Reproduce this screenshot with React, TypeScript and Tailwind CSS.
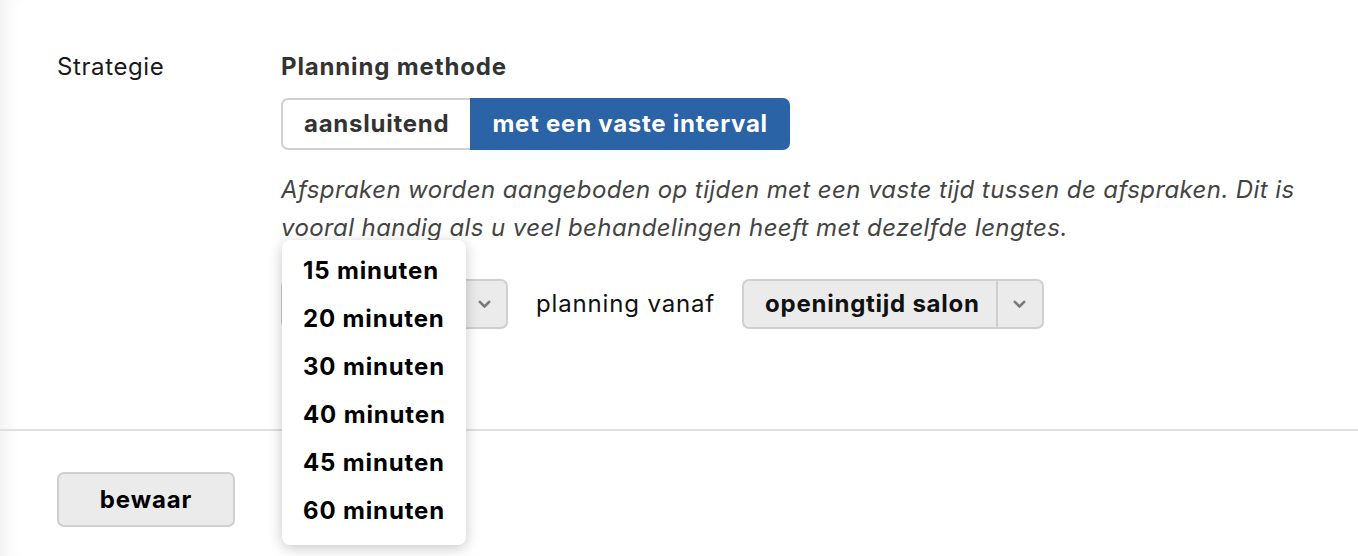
import React from "react";

const Chevron = () => (
  <svg width="13" height="9" viewBox="0 0 13 9" fill="none">
    <path d="M1.8 1.8 L6.5 6.5 L11.2 1.8" stroke="#7a7a7a" strokeWidth="2.6" strokeLinecap="round" strokeLinejoin="round" />
  </svg>
);

const options = ["15 minuten", "20 minuten", "30 minuten", "40 minuten", "45 minuten", "60 minuten"];

export default function App() {
  return (
    <div
      className="w-[1358px] h-[556px] overflow-hidden bg-white shadow-[inset_18px_0_16px_-10px_rgba(0,0,0,0.05)] text-[24px] tracking-[0.6px] text-[#111]"
      style={{ fontFamily: "Inter, 'Noto Sans', sans-serif" }}
    >
      <div className="flex pt-[51px]">
        <div className="w-[281px] pl-[57px] leading-[32px] text-[#1a1a1a]">Strategie</div>
        <div className="flex flex-col">
          <div className="font-bold leading-[32px] text-[#333] tracking-[0.85px]">Planning methode</div>
          <div className="mt-[15px] flex h-[52px] w-fit font-bold tracking-[0.75px]">
            <div className="flex items-center px-[21px] border-2 border-r-0 border-[#d0d0d0] rounded-l-[7px] text-[#333] bg-white">
              aansluitend
            </div>
            <div className="flex items-center px-[22px] bg-[#2b63a7] rounded-r-[7px] text-white">
              met een vaste interval
            </div>
          </div>
          <div className="mt-[21px] italic leading-[38px] text-[#444] tracking-[0.4px] whitespace-nowrap">
            Afspraken worden aangeboden op tijden met een vaste tijd tussen de afspraken. Dit is
            <br />
            vooral handig als u veel behandelingen heeft met dezelfde lengtes.
          </div>
          <div className="mt-[32px] flex items-center">
            <div className="relative">
              <div className="flex h-[50px] w-[227px] border-2 border-[#d0d0d0] rounded-[7px] bg-[#ebebeb]">
                <div className="flex-1 border-r-2 border-[#d0d0d0]" />
                <div className="flex w-[44px] items-center justify-center">
                  <Chevron />
                </div>
              </div>
              <div className="absolute left-px top-[-39px] w-[184px] bg-white rounded-[8px] shadow-[0_3px_14px_rgba(0,0,0,0.22)] pt-[7px] pb-[10px] z-10">
                {options.map((o) => (
                  <div key={o} className="h-[48px] flex items-center px-[21px] font-bold text-black tracking-[0.85px] whitespace-nowrap">
                    {o}
                  </div>
                ))}
              </div>
            </div>
            <div className="ml-[28px] mr-[27px] tracking-[0.85px]">planning vanaf</div>
            <div className="flex h-[50px] border-2 border-[#d0d0d0] rounded-[7px] bg-[#ebebeb]">
              <div className="flex items-center pl-[21px] pr-[16px] font-bold border-r-2 border-[#d0d0d0] tracking-[0.75px]">openingtijd salon</div>
              <div className="flex w-[44px] items-center justify-center">
                <Chevron />
              </div>
            </div>
          </div>
        </div>
      </div>
      <div className="mt-[100px] h-[2px] bg-[#e0e0e0]" />
      <div className="pl-[57px] mt-[41px]">
        <div className="flex h-[55px] w-[178px] items-center justify-center border-2 border-[#cfcfcf] rounded-[7px] bg-[#ebebeb] font-bold text-black tracking-[0.9px]">
          bewaar
        </div>
      </div>
    </div>
  );
}
